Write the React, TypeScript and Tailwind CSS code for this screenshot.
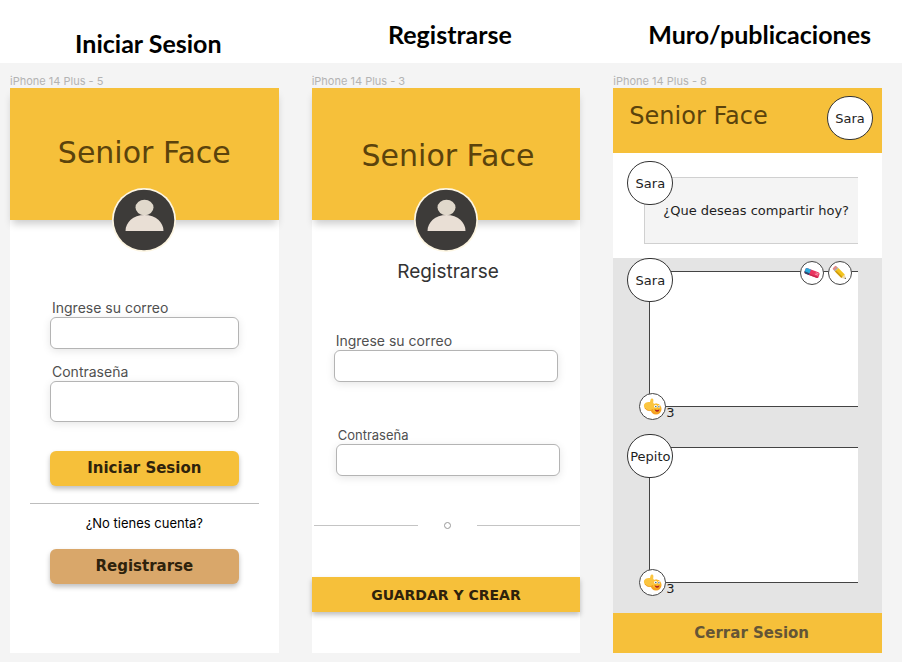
import React from "react";

const display = "font-['DejaVu_Sans',sans-serif]";

function UserAvatar() {
  return (
    <svg
      viewBox="0 0 64 64"
      className="relative mx-auto -mt-8 block h-16 w-16"
      role="img"
      aria-label="Usuario"
    >
      <circle cx="32" cy="32" r="32" fill="#fdf6e3" />
      <circle cx="32" cy="32" r="30.300" fill="#3d3b39" />
      <ellipse cx="32.500" cy="19.500" rx="9" ry="7.800" fill="#e0d8cb" />
      <path d="M13.500 43c0-8.500 7.500-16 19-16s19 7.500 19 16z" fill="#e9dfd5" />
    </svg>
  );
}

function Brand({ className }: { className: string }) {
  return (
    <header
      className={`flex h-[132px] items-start justify-center bg-[#f6c03a] shadow-[0_6px_8px_-2px_rgba(0,0,0,0.2)] ${className}`}
    >
      <h2 className={`${display} text-[30px] leading-9 text-[#5b430c]`}>Senior Face</h2>
    </header>
  );
}

function Field({
  id,
  label,
  type,
  className,
  labelClass,
  inputClass,
}: {
  id: string;
  label: string;
  type: string;
  className: string;
  labelClass: string;
  inputClass: string;
}) {
  return (
    <div className={`flex flex-col ${className}`}>
      <label htmlFor={id} className={`h-[18px] leading-[18px] text-[#505050] ${labelClass}`}>
        {label}
      </label>
      <input
        id={id}
        type={type}
        className={`w-full rounded-md border border-[#b4b4b4] bg-white px-3 text-sm shadow-[0_2px_8px_rgba(0,0,0,0.10)] outline-none ${inputClass}`}
      />
    </div>
  );
}

function Screen({ name, children }: { name: string; children: React.ReactNode }) {
  return (
    <section className="flex min-w-0 flex-col">
      <p className="h-[15px] text-[11px] leading-[17px] text-[#b3b3b3]">{name}</p>
      <div className="flex grow flex-col bg-white">{children}</div>
    </section>
  );
}

function NameBubble({ name, className }: { name: string; className: string }) {
  return (
    <span
      className={`${display} flex h-11 w-[46px] items-center justify-center rounded-full border border-[#333] bg-white text-[13px] leading-none text-[#1e1e1e] ${className}`}
    >
      {name}
    </span>
  );
}

function EraserIcon() {
  return (
    <svg viewBox="0 0 20 20" className="h-5 w-5" aria-hidden="true">
      <g transform="rotate(20 10 10)">
        <rect x="2.500" y="7" width="15" height="6" rx="1.800" fill="#ea3560" />
        <path d="M4.300 7h3.500v4.500H2.500V8.800A1.800 1.800 0 0 1 4.300 7z" fill="#2aa9dc" />
        <path d="M2.500 11h5.300v2H4.300a1.800 1.800 0 0 1-1.800-1.800z" fill="#28486c" />
        <path d="M7.800 11.600h9.600a1.800 1.800 0 0 1-1.700 1.400H7.800z" fill="#c9264e" />
        <path d="M13.500 8.500h3M13 10h3.500" stroke="#f7a3b5" strokeWidth=".8" />
      </g>
    </svg>
  );
}

function PencilIcon() {
  return (
    <svg viewBox="0 0 20 20" className="h-5 w-5" aria-hidden="true">
      <g transform="rotate(45 10 10)">
        <rect x="1.500" y="7.700" width="3" height="4.800" rx="1.200" fill="#e58a86" />
        <rect x="3.800" y="7.700" width="1.600" height="4.800" fill="#a9a9a9" />
        <rect x="5.400" y="7.700" width="9.100" height="4.800" fill="#f3c41c" />
        <rect x="5.400" y="10.900" width="9.100" height="1.600" fill="#cf9a10" />
        <path d="M14.500 7.700l4 2.400-4 2.400z" fill="#f0d9a8" />
        <path d="M17.200 9.300l1.300.8-1.300.8z" fill="#444" />
      </g>
    </svg>
  );
}

function LikeIcon() {
  return (
    <svg viewBox="0 0 20 20" className="h-5 w-5" aria-hidden="true">
      <circle cx="13" cy="12" r="5.500" fill="#f5a020" />
      <circle cx="13.500" cy="11" r="4.300" fill="#fbbd2b" />
      <path
        d="M1 7.800C1.600 5.600 4 4.600 7 5L7.600 2.500c.4-1.500 2.900-1.200 2.800.6L10.200 6c1.500.9 2 2.800 1.400 4.500-.7 2.300-3.200 3.600-5.700 3C2.600 12.900.4 10.800 1 7.800z"
        fill="#fbc540"
      />
      <path d="M2 11c1.500 2.500 5 3.500 8 1.500" fill="none" stroke="#ee9a1c" strokeWidth="1" />
      <circle cx="12.600" cy="9.200" r="1.500" fill="#fff" />
      <circle cx="15.900" cy="9.500" r="1.300" fill="#fff" />
      <circle cx="12.800" cy="9.500" r=".8" fill="#3f6b86" />
      <circle cx="15.900" cy="9.800" r=".7" fill="#3f6b86" />
      <path d="M11.600 12.200c1.600.9 3.300.9 4.900 0-.2 3.400-4.100 3.700-4.900 0z" fill="#b3261e" />
    </svg>
  );
}

const iconButton =
  "flex items-center justify-center rounded-full border border-[#444] bg-white";

function Post({ author, likes, editable }: { author: string; likes: number; editable?: boolean }) {
  return (
    <article className="relative ml-9 mr-6 h-[136px] border-y border-l border-[#444] bg-white">
      <NameBubble name={author} className="absolute -left-[23px] -top-[14px]" />
      {editable && (
        <div className="absolute -top-[11px] right-1.5 flex gap-1">
          <button type="button" aria-label="Borrar" className={`${iconButton} h-6 w-6`}>
            <EraserIcon />
          </button>
          <button type="button" aria-label="Editar" className={`${iconButton} h-6 w-6`}>
            <PencilIcon />
          </button>
        </div>
      )}
      <div className="absolute -bottom-[14px] -left-[11px] flex items-end">
        <button type="button" aria-label="Me gusta" className={`${iconButton} h-[27px] w-[27px]`}>
          <LikeIcon />
        </button>
        <span className={`${display} text-[13px] leading-[14px] text-[#1e1e1e]`}>{likes}</span>
      </div>
    </article>
  );
}

const actionButton = `${display} h-[35px] font-bold text-[#2e220c] shadow-[0_3px_5px_rgba(0,0,0,0.25)]`;

export default function App() {
  return (
    <main className="flex min-h-screen flex-col bg-[#f4f4f4] font-[Inter,sans-serif]">
      <div className="grid h-[63px] grid-cols-3 gap-[33px] bg-white pl-[10px] pr-5 text-center font-[Lato,sans-serif] text-[25px] font-bold leading-8 text-black">
        <h1 className="pl-2 pt-[27px]">Iniciar Sesion</h1>
        <h1 className="pl-2 pt-[18px]">Registrarse</h1>
        <h1 className="whitespace-nowrap pl-6 pt-[18px]">Muro/publicaciones</h1>
      </div>

      <div className="grid grow grid-cols-3 gap-[33px] pb-[9px] pl-[10px] pr-5 pt-[10px]">
        <Screen name="iPhone 14 Plus - 5">
          <Brand className="pt-[47px]" />
          <UserAvatar />
          <form className="flex flex-col" onSubmit={(e) => e.preventDefault()}>
            <Field
              id="login-email"
              label="Ingrese su correo"
              type="email"
              className="mx-10 mt-[47px]"
              labelClass="pl-0.5 text-sm"
              inputClass="h-8"
            />
            <Field
              id="login-password"
              label="Contraseña"
              type="password"
              className="mx-10 mt-[14px]"
              labelClass="pl-0.5 text-sm"
              inputClass="h-[41px]"
            />
            <button
              type="submit"
              className={`${actionButton} mx-10 mt-[29px] rounded-md bg-[#f6c03a] text-[15px]`}
            >
              Iniciar Sesion
            </button>
            <hr className="mx-5 mt-[17px] border-[#bdbdbd]" />
            <p className="mt-[9px] text-center text-[13px] leading-5 text-black">
              ¿No tienes cuenta?
            </p>
            <button
              type="button"
              className={`${actionButton} mx-10 mt-4 rounded-md bg-[#d9a76a] text-[15px]`}
            >
              Registrarse
            </button>
          </form>
        </Screen>

        <Screen name="iPhone 14 Plus - 3">
          <Brand className="pl-1 pt-[50px]" />
          <UserAvatar />
          <form className="flex flex-col" onSubmit={(e) => e.preventDefault()}>
            <h3 className="mt-1.5 pl-1 text-center text-[19px] leading-7 text-[#333]">
              Registrarse
            </h3>
            <Field
              id="signup-email"
              label="Ingrese su correo"
              type="email"
              className="mx-[22px] mt-[46px]"
              labelClass="pl-0.5 text-sm"
              inputClass="h-8"
            />
            <Field
              id="signup-password"
              label="Contraseña"
              type="password"
              className="ml-6 mr-5 mt-11"
              labelClass="pl-0.5 text-[13px]"
              inputClass="h-8"
            />
            <div className="mt-[45px] flex h-2 items-center pl-0.5">
              <span className="h-px grow bg-[#c4c4c4]" />
              <span className="mx-[26px] h-[7px] w-[7px] rounded-full border border-[#999]" />
              <span className="h-px grow bg-[#c4c4c4]" />
            </div>
            <button type="submit" className={`${actionButton} mt-12 bg-[#f6c03a] text-sm`}>
              GUARDAR Y CREAR
            </button>
          </form>
        </Screen>

        <Screen name="iPhone 14 Plus - 8">
          <header className="flex h-[65px] justify-between bg-[#f6c03a] pl-4 pr-[9px] pt-2">
            <h2 className={`${display} pt-1 text-2xl leading-8 text-[#5b430c]`}>Senior Face</h2>
            <NameBubble name="Sara" className="" />
          </header>
          <div className="relative pb-[14px] pl-[31px] pr-6 pt-6">
            <input
              type="text"
              aria-label="Publicación"
              placeholder="¿Que deseas compartir hoy?"
              className={`${display} block h-[67px] w-full border-y border-l border-[#d0d0d0] bg-[#f4f4f4] pl-[18px] text-[13px] outline-none placeholder:text-[#1e1e1e]`}
            />
            <NameBubble name="Sara" className="absolute left-[14px] top-2" />
          </div>
          <div className="flex flex-col gap-10 bg-[#e4e4e4] pb-[30px] pt-[13px]">
            <Post author="Sara" likes={3} editable />
            <Post author="Pepito" likes={3} />
          </div>
          <button
            type="button"
            className={`${display} h-10 bg-[#f6c03a] pl-2 text-[15px] font-bold text-[#645536]`}
          >
            Cerrar Sesion
          </button>
        </Screen>
      </div>
    </main>
  );
}
